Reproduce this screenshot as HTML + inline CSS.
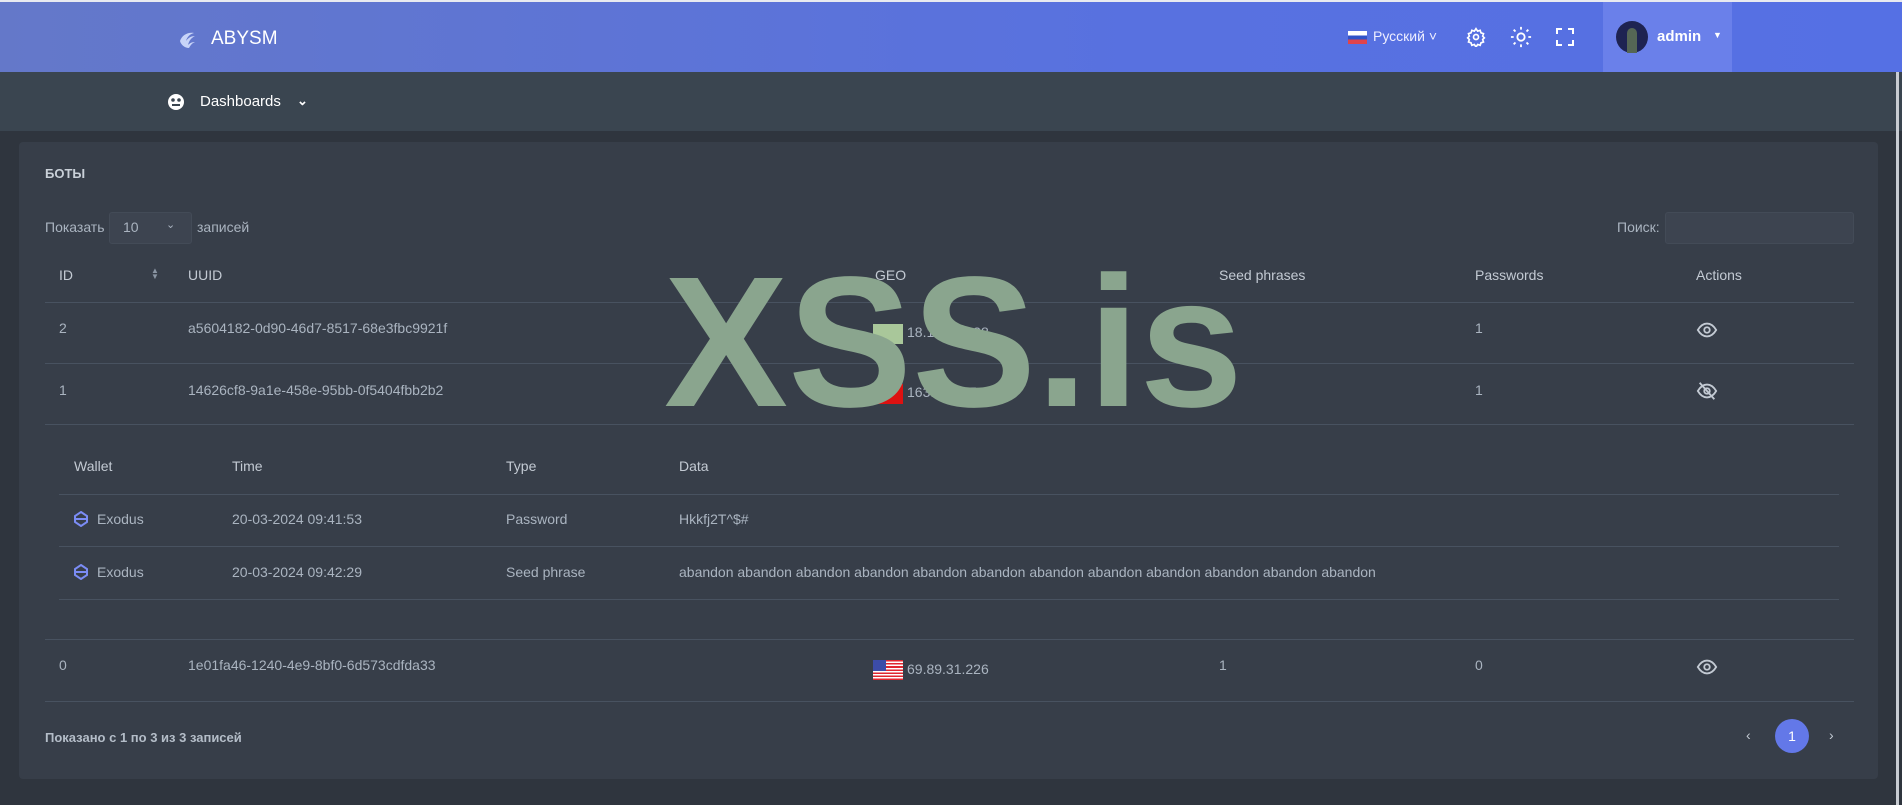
<!DOCTYPE html>
<html><head><meta charset="utf-8"><style>
*{margin:0;padding:0;box-sizing:border-box}
body{width:1902px;height:805px;overflow:hidden;background:#2f353e;font-family:"Liberation Sans",sans-serif;color:#aab4c0;font-size:14px;position:relative}
.a{position:absolute;white-space:nowrap}
.hdr{position:absolute;left:0;top:2px;width:1902px;height:70px;background:linear-gradient(90deg,#6478c9,#5871e0 60%,#5570e4)}
.nav{position:absolute;left:0;top:72px;width:1902px;height:59px;background:#3a4550}
.card{position:absolute;left:19px;top:142px;width:1859px;height:637px;background:#373e49;border-radius:4px}
.ln{position:absolute;height:1px;background:#485260}
.th{color:#c3cad3;font-weight:normal}
.w{color:#fff}
.eye{position:absolute;width:22px;height:22px}
</style></head><body>
<div class="a" style="left:0;top:0;width:1902px;height:2px;background:#e8eaf0"></div>
<div class="hdr"></div>
<svg class="a" style="left:176px;top:27px" width="24" height="24" viewBox="0 0 24 24"><path d="M4 14c2-6 8-9 14-8-4 1-7 4-8 8 2-3 5-5 9-5-4 2-6 5-7 9 2-2 4-3 7-3-3 1-5 4-6 6-4 0-8-3-9-7z" fill="#dbe4ff" opacity=".85"/></svg>
<div class="a w" style="left:211px;top:28px;font-size:19px">ABYSM</div>
<div class="a" style="left:1348px;top:31px;width:19px;height:13px;background:linear-gradient(#fff 33%,#3052c8 33%,#3052c8 66%,#e0444b 66%)"></div>
<div class="a w" style="left:1373px;top:28px;font-size:14px;color:#eef">Русский ˅</div>
<svg class="a" style="left:1466px;top:27px" width="20" height="20" viewBox="0 0 24 24" fill="none" stroke="#fff" stroke-width="2"><circle cx="12" cy="12" r="3"/><path d="M12 2l2 3 3-1 1 3 3 1-1 3 2 2-2 2 1 3-3 1-1 3-3-1-2 3-2-3-3 1-1-3-3-1 1-3-2-2 2-2-1-3 3-1 1-3 3 1z"/></svg>
<svg class="a" style="left:1510px;top:26px" width="22" height="22" viewBox="0 0 24 24" fill="none" stroke="#fff" stroke-width="2"><circle cx="12" cy="12" r="4"/><path d="M12 1v3M12 20v3M1 12h3M20 12h3M4 4l2 2M18 18l2 2M4 20l2-2M18 6l2-2"/></svg>
<svg class="a" style="left:1556px;top:28px" width="18" height="18" viewBox="0 0 18 18" fill="none" stroke="#fff" stroke-width="2"><path d="M1 6V1h5M12 1h5v5M17 12v5h-5M6 17H1v-5"/></svg>
<div class="a" style="left:1603px;top:2px;width:129px;height:70px;background:#6a80ea"></div>
<div class="a" style="left:1616px;top:21px;width:32px;height:32px;border-radius:50%;background:#1e2352"><div style="margin:7px 0 0 11px;width:10px;height:25px;background:#556655;border-radius:5px 5px 0 0"></div></div>
<div class="a w" style="left:1657px;top:28px;font-size:15px;font-weight:bold">admin</div>
<div class="a w" style="left:1713px;top:30px;font-size:9px">▼</div>
<div class="nav"></div>
<svg class="a" style="left:167px;top:93px" width="18" height="18" viewBox="0 0 18 18"><circle cx="9" cy="9" r="8" fill="#fff"/><circle cx="6" cy="7" r="1.8" fill="#3a4550"/><circle cx="12" cy="7" r="1.8" fill="#3a4550"/><path d="M5 12h8" stroke="#3a4550" stroke-width="2"/></svg>
<div class="a w" style="left:200px;top:93px;font-size:15px">Dashboards</div>
<div class="a w" style="left:297px;top:93px;font-size:13px;font-weight:bold">⌄</div>
<div class="a" style="left:1896px;top:72px;width:3px;height:733px;background:#c8ccd2"></div>
<div class="card"></div>
<div class="a" style="left:45px;top:166px;font-size:13px;font-weight:bold;color:#c9d0d8">БОТЫ</div>
<div class="a" style="left:45px;top:219px">Показать</div>
<div class="a" style="left:109px;top:212px;width:83px;height:32px;background:#3d4450;border:1px solid #434b57;border-radius:3px"></div>
<div class="a" style="left:123px;top:219px">10</div>
<div class="a" style="left:166px;top:218px;font-size:11px">⌄</div>
<div class="a" style="left:197px;top:219px">записей</div>
<div class="a" style="left:1617px;top:219px">Поиск:</div>
<div class="a" style="left:1665px;top:212px;width:189px;height:32px;background:#3d4450;border:1px solid #434b57;border-radius:3px"></div>
<div class="a th" style="left:59px;top:267px">ID</div>
<div class="a" style="left:151px;top:268px;font-size:8px;line-height:6px;color:#8a95a3">▲<br>▼</div>
<div class="a th" style="left:188px;top:267px">UUID</div>
<div class="a th" style="left:875px;top:267px">GEO</div>
<div class="a th" style="left:1219px;top:267px">Seed phrases</div>
<div class="a th" style="left:1475px;top:267px">Passwords</div>
<div class="a th" style="left:1696px;top:267px">Actions</div>
<div class="ln" style="left:45px;top:302px;width:1809px"></div>
<div class="a" style="left:59px;top:320px">2</div>
<div class="a" style="left:188px;top:320px">a5604182-0d90-46d7-8517-68e3fbc9921f</div>
<div class="a" style="left:873px;top:324px;width:30px;height:20px;background:#a9c79a"></div>
<div class="a" style="left:907px;top:324px">18.164.22.38</div>
<div class="a" style="left:1219px;top:320px">1</div>
<div class="a" style="left:1475px;top:320px">1</div>
<svg class="eye" style="left:1696px;top:319px" viewBox="0 0 24 24" fill="none" stroke="#c3cad3" stroke-width="2"><path d="M2 12c3-5 6-7 10-7s7 2 10 7c-3 5-6 7-10 7S5 17 2 12z"/><circle cx="12" cy="12" r="3"/></svg>
<div class="ln" style="left:45px;top:363px;width:1809px"></div>
<div class="a" style="left:59px;top:382px">1</div>
<div class="a" style="left:188px;top:382px">14626cf8-9a1e-458e-95bb-0f5404fbb2b2</div>
<div class="a" style="left:873px;top:384px;width:30px;height:20px;background:linear-gradient(135deg,#7a96b8 50%,#d11 50%)"></div>
<div class="a" style="left:907px;top:384px">163.29.195.18</div>
<div class="a" style="left:1219px;top:382px">1</div>
<div class="a" style="left:1475px;top:382px">1</div>
<svg class="eye" style="left:1696px;top:380px" viewBox="0 0 24 24" fill="none" stroke="#c3cad3" stroke-width="2"><path d="M2 12c3-5 6-7 10-7s7 2 10 7c-3 5-6 7-10 7S5 17 2 12z"/><circle cx="12" cy="12" r="3"/><path d="M4 3l16 18"/></svg>
<div class="ln" style="left:45px;top:424px;width:1809px"></div>
<div class="a th" style="left:74px;top:458px">Wallet</div>
<div class="a th" style="left:232px;top:458px">Time</div>
<div class="a th" style="left:506px;top:458px">Type</div>
<div class="a th" style="left:679px;top:458px">Data</div>
<div class="ln" style="left:59px;top:494px;width:1780px"></div>
<svg class="a" style="left:74px;top:511px" width="14" height="16" viewBox="0 0 14 16" fill="none" stroke="#7b8cf5" stroke-width="2"><path d="M7 1l6 4v6l-6 4-6-4V5zM1 8h12"/></svg>
<div class="a" style="left:97px;top:511px">Exodus</div>
<div class="a" style="left:232px;top:511px">20-03-2024 09:41:53</div>
<div class="a" style="left:506px;top:511px">Password</div>
<div class="a" style="left:679px;top:511px">Hkkfj2T^$#</div>
<div class="ln" style="left:59px;top:546px;width:1780px"></div>
<svg class="a" style="left:74px;top:564px" width="14" height="16" viewBox="0 0 14 16" fill="none" stroke="#7b8cf5" stroke-width="2"><path d="M7 1l6 4v6l-6 4-6-4V5zM1 8h12"/></svg>
<div class="a" style="left:97px;top:564px">Exodus</div>
<div class="a" style="left:232px;top:564px">20-03-2024 09:42:29</div>
<div class="a" style="left:506px;top:564px">Seed phrase</div>
<div class="a" style="left:679px;top:564px">abandon abandon abandon abandon abandon abandon abandon abandon abandon abandon abandon abandon</div>
<div class="ln" style="left:59px;top:599px;width:1780px"></div>
<div class="ln" style="left:45px;top:639px;width:1809px"></div>
<div class="a" style="left:59px;top:657px">0</div>
<div class="a" style="left:188px;top:657px">1e01fa46-1240-4e9-8bf0-6d573cdfda33</div>
<div class="a" style="left:873px;top:660px;width:30px;height:20px;background:repeating-linear-gradient(#e0262f 0 1.6px,#fff 1.6px 3.1px)"><div style="width:13px;height:11px;background:#3c4ca8"></div></div>
<div class="a" style="left:907px;top:661px">69.89.31.226</div>
<div class="a" style="left:1219px;top:657px">1</div>
<div class="a" style="left:1475px;top:657px">0</div>
<svg class="eye" style="left:1696px;top:656px" viewBox="0 0 24 24" fill="none" stroke="#c3cad3" stroke-width="2"><path d="M2 12c3-5 6-7 10-7s7 2 10 7c-3 5-6 7-10 7S5 17 2 12z"/><circle cx="12" cy="12" r="3"/></svg>
<div class="ln" style="left:45px;top:701px;width:1809px"></div>
<div class="a" style="left:45px;top:730px;font-size:13px;font-weight:bold;color:#b4bdc8">Показано с 1 по 3 из 3 записей</div>
<div class="a" style="left:1746px;top:727px;color:#c3cad3">‹</div>
<div class="a" style="left:1775px;top:719px;width:34px;height:34px;border-radius:50%;background:#6378e8;color:#fff;text-align:center;line-height:34px">1</div>
<div class="a" style="left:1829px;top:727px;color:#c3cad3">›</div>
<div class="a" style="left:664px;top:250px;font-size:186px;font-weight:bold;color:#8aa58e;line-height:1;letter-spacing:0">XSS.is</div>
</body></html>
